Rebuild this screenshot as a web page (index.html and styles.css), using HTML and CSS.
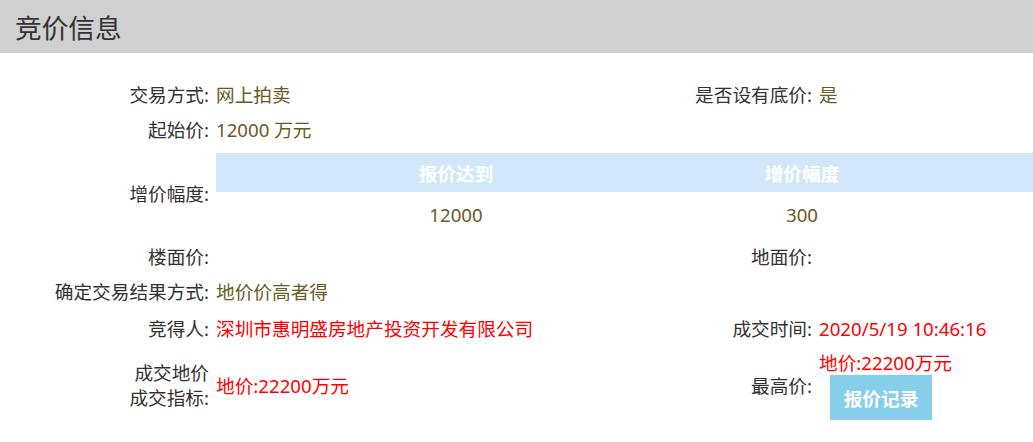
FILE: index.html
```html
<!DOCTYPE html>
<html lang="zh-CN">
<head>
<meta charset="utf-8">
<title>竞价信息</title>
<link rel="stylesheet" href="styles.css">
</head>
<body>
<div class="panel">
  <div class="panel-title">竞价信息</div>
  <div class="info-grid">
    <div class="lbl">交易方式:</div>
    <div class="val">网上拍卖</div>
    <div class="lbl">是否设有底价:</div>
    <div class="val">是</div>

    <div class="lbl">起始价:</div>
    <div class="val span3">12000 万元</div>

    <div class="lbl lbl-mid">增价幅度:</div>
    <div class="nested span3">
      <div class="nested-head">
        <div class="nh c1">报价达到</div>
        <div class="nh c2">增价幅度</div>
        <div class="nh c3"></div>
      </div>
      <div class="nested-row">
        <div class="nd c1">12000</div>
        <div class="nd c2">300</div>
        <div class="nd c3"></div>
      </div>
    </div>

    <div class="lbl">楼面价:</div>
    <div class="val"></div>
    <div class="lbl">地面价:</div>
    <div class="val"></div>

    <div class="lbl">确定交易结果方式:</div>
    <div class="val span3">地价价高者得</div>

    <div class="lbl row-win">竞得人:</div>
    <div class="val red row-win">深圳市惠明盛房地产投资开发有限公司</div>
    <div class="lbl row-win">成交时间:</div>
    <div class="val red row-win">2020/5/19 10:46:16</div>

    <div class="lbl lbl-two tall">成交地价<br>成交指标:</div>
    <div class="val red tall">地价:22200万元</div>
    <div class="lbl tall">最高价:</div>
    <div class="val red tall stack">
      <div class="stack-line">地价:22200万元</div>
      <div class="btn">报价记录</div>
    </div>
  </div>
</div>
</body>
</html>
```

FILE: styles.css
```css
html, body {
  margin: 0;
  padding: 0;
  background: #fff;
}
body {
  font-family: "Noto Sans", "Noto Sans CJK SC", sans-serif;
  font-size: 18.67px;
  color: #333;
}
.panel-title {
  height: 53px;
  background: #d0d0d0;
  color: #333;
  font-size: 26.67px;
  line-height: 53px;
  padding-left: 15px;
  font-family: "Noto Sans CJK SC", sans-serif;
}
.info-grid {
  display: grid;
  grid-template-columns: 211px 395px 208px 1fr;
  padding-top: 24px;
  padding-bottom: 12px;
}
.lbl, .val {
  min-height: 35px;
  display: flex;
  align-items: center;
  line-height: 25px;
  font-family: "Noto Sans", "Noto Sans CJK SC", sans-serif;
}
.lbl {
  justify-content: flex-end;
  text-align: right;
  padding-right: 2px;
  color: #333;
}
.val {
  padding-left: 5px;
  color: #6b5a24;
  white-space: nowrap;
}
.span3 {
  grid-column: span 3;
}
.red {
  color: #ff0000;
}
.nested {
  padding: 6px 0 3px 5px;
}
.nested-head {
  display: grid;
  grid-template-columns: 480px 212px 1fr;
  background: #d2e8fa;
  height: 39px;
  align-items: center;
}
.nh {
  text-align: center;
  color: #fff;
  font-weight: bold;
  font-family: "Noto Sans CJK SC", sans-serif;
}
.nested-row {
  display: grid;
  grid-template-columns: 480px 212px 1fr;
  height: 44px;
  align-items: center;
}
.nd {
  text-align: center;
  color: #6b5a24;
}
.row-win {
  min-height: 33px;
  padding-top: 3px;
}
.tall {
  min-height: 80px;
}
.stack {
  flex-direction: column;
  align-items: flex-start;
  justify-content: center;
}
.stack-line {
  line-height: 25px;
}
.btn {
  margin-left: 11px;
  width: 102px;
  height: 45px;
  background: #87ceeb;
  color: #fff;
  font-weight: bold;
  font-family: "Noto Sans CJK SC", sans-serif;
  display: flex;
  align-items: center;
  justify-content: center;
}
```
